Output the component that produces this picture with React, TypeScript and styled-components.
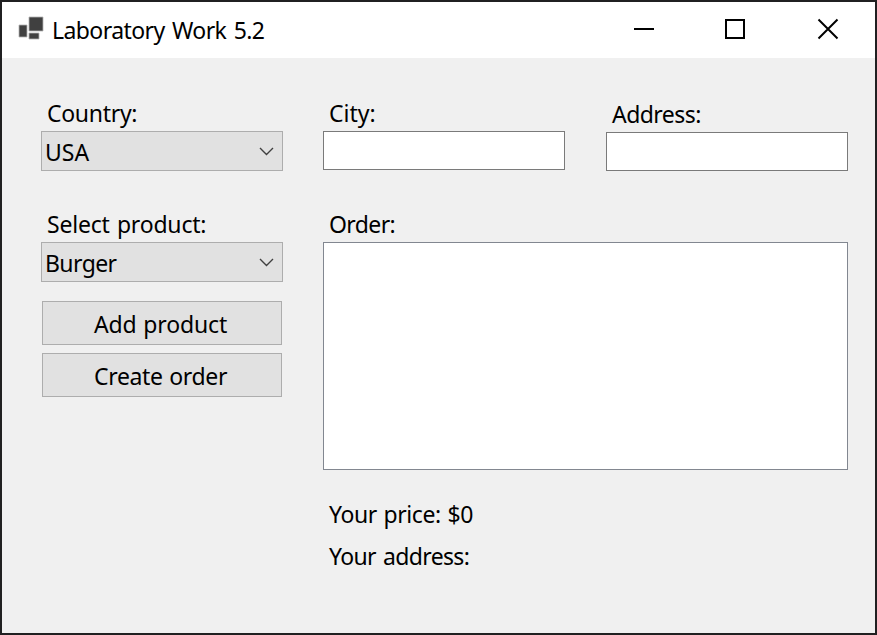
import React from "react";
import styled, { createGlobalStyle } from "styled-components";

const GlobalStyle = createGlobalStyle`
  * { box-sizing: border-box; }
  body { margin: 0; background: #f0f0f0; }
`;

const Window = styled.div`
  width: 877px;
  height: 635px;
  border: 2px solid #202021;
  background: #f0f0f0;
  color: #000;
  font-family: "Noto Sans", "Open Sans", sans-serif;
  font-size: 23px;
  line-height: 32px;
  overflow: hidden;
`;

const TitleBar = styled.header`
  display: flex;
  height: 56px;
  padding: 12px 0 0 16px;
  background: #fff;
`;

const AppIcon = styled.svg`
  flex: none;
  width: 28px;
  height: 28px;
  margin-right: 6px;
`;

const Text = styled.span<{ $tracking?: number; $wordGap?: number }>`
  display: block;
  white-space: nowrap;
  letter-spacing: ${(p) => p.$tracking ?? 0}px;
  word-spacing: ${(p) => p.$wordGap ?? 0}px;
`;

const WindowControls = styled.div`
  display: flex;
  margin-left: auto;
  padding: 4px 36px 0 0;
`;

const ControlIcon = styled.svg`
  width: 22px;
  height: 22px;
  fill: none;
  stroke: #000;
  stroke-width: 2;

  & + & {
    margin-left: 69px;
  }

  &:last-child {
    margin-left: 71px;
  }
`;

const Form = styled.main`
  display: grid;
  grid-template-columns: 242px 525px;
  column-gap: 40px;
  padding: 39px 0 0 39px;
`;

const Column = styled.div`
  display: flex;
  flex-direction: column;
`;

const FieldRow = styled.div`
  display: grid;
  grid-template-columns: 242px 242px;
  column-gap: 41px;
  height: 111px;
`;

const Field = styled.div<{ $height?: number; $drop?: number }>`
  display: flex;
  flex-direction: column;
  height: ${(p) => (p.$height ? `${p.$height}px` : "auto")};
  padding-top: ${(p) => p.$drop ?? 0}px;
`;

const Label = styled.label`
  height: 34px;
  padding-left: 6px;
`;

const TextInput = styled.input`
  width: 100%;
  height: 39px;
  padding: 0 4px;
  border: 1px solid #7a7a7a;
  border-radius: 0;
  outline: none;
  background: #fff;
  font: inherit;
`;

const ComboBox = styled.button`
  display: flex;
  justify-content: space-between;
  width: 100%;
  height: 40px;
  padding: 4px 8px 0 3px;
  border: 1px solid #adadad;
  background: #e1e1e1;
  color: inherit;
  font: inherit;
`;

const Chevron = styled.svg`
  width: 16px;
  height: 10px;
  margin-top: 10px;
  fill: none;
  stroke: #404040;
  stroke-width: 1.4;
`;

const Buttons = styled.div`
  display: flex;
  flex-direction: column;
  gap: 8px;
  padding: 19px 1px 0;
`;

const PushButton = styled.button`
  display: flex;
  justify-content: flex-start;
  height: 44px;
  padding: 6px 0 0 51px;
  border: 1px solid #adadad;
  background: #e1e1e1;
  color: inherit;
  font: inherit;
`;

const OrderList = styled.div`
  height: 228px;
  border: 1px solid #828790;
  background: #fff;
`;

const Summary = styled.div`
  display: flex;
  flex-direction: column;
  gap: 10px;
  padding: 28px 0 0 6px;
`;

function Select({ value, tracking }: { value: string; tracking: number }) {
  return (
    <ComboBox type="button">
      <Text $tracking={tracking}>{value}</Text>
      <Chevron viewBox="0 0 16 10">
        <path d="M2 2l6.5 6.5L15 2" />
      </Chevron>
    </ComboBox>
  );
}

export default function App() {
  return (
    <>
      <GlobalStyle />
      <Window>
        <TitleBar>
          <AppIcon viewBox="0 0 28 28">
            <g fill="#404040" stroke="#b4b4b4" strokeWidth="0.8">
              <path d="M11 3h14v14H11zM1 11h8v12H1zM11 19h10v6H11z" />
            </g>
          </AppIcon>
          <Text $tracking={-0.58} $wordGap={2}>Laboratory Work 5.2</Text>
          <WindowControls>
            <ControlIcon viewBox="0 0 22 22">
              <path d="M1 11h20" />
            </ControlIcon>
            <ControlIcon viewBox="0 0 22 22">
              <path d="M2 2h18v18H2z" />
            </ControlIcon>
            <ControlIcon viewBox="0 0 22 22">
              <path d="m1.5 1.5 19 19m0-19-19 19" />
            </ControlIcon>
          </WindowControls>
        </TitleBar>
        <Form>
          <Column>
            <Field $height={111}>
              <Label><Text $tracking={-0.3}>Country:</Text></Label>
              <Select value="USA" tracking={0} />
            </Field>
            <Field>
              <Label><Text $tracking={-0.2} $wordGap={1.5}>Select product:</Text></Label>
              <Select value="Burger" tracking={-0.6} />
            </Field>
            <Buttons>
              <PushButton type="button"><Text $tracking={-0.15} $wordGap={1}>Add product</Text></PushButton>
              <PushButton type="button"><Text $tracking={-0.35} $wordGap={1}>Create order</Text></PushButton>
            </Buttons>
          </Column>
          <Column>
            <FieldRow>
              <Field>
                <Label><Text>City:</Text></Label>
                <TextInput aria-label="City" />
              </Field>
              <Field $drop={1}>
                <Label><Text $tracking={-0.55}>Address:</Text></Label>
                <TextInput aria-label="Address" />
              </Field>
            </FieldRow>
            <Field>
              <Label><Text $tracking={-0.6}>Order:</Text></Label>
              <OrderList />
            </Field>
            <Summary>
              <Text $tracking={-0.4} $wordGap={1}>Your price: $0</Text>
              <Text $tracking={-0.65} $wordGap={1.8}>Your address:</Text>
            </Summary>
          </Column>
        </Form>
      </Window>
    </>
  );
}
